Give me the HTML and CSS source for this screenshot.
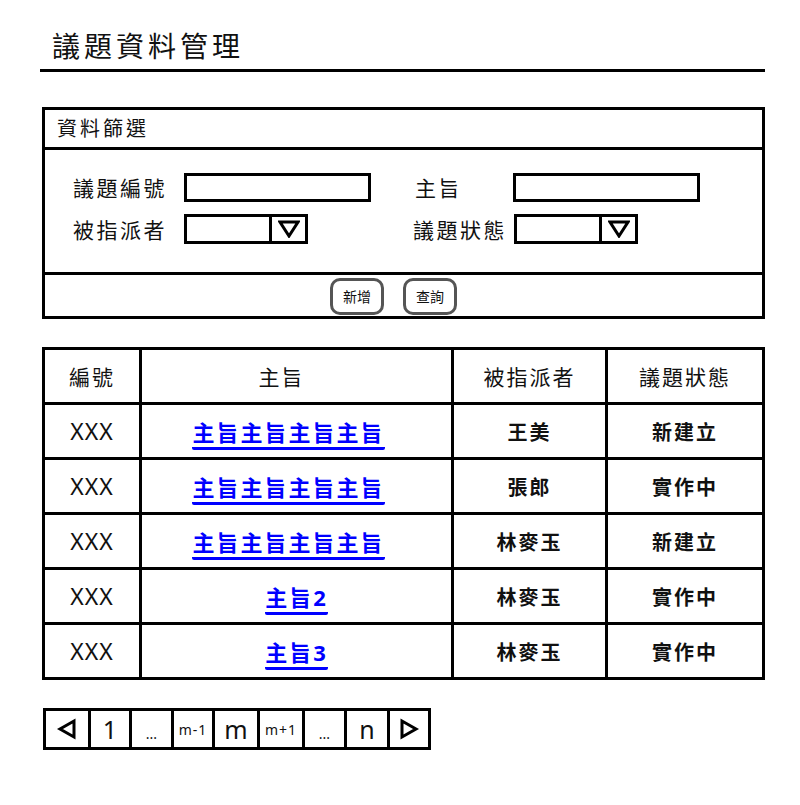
FILE: index.html
```html
<!DOCTYPE html>
<html lang="zh-Hant">
<head>
  <meta charset="UTF-8">
  <title>議題資料管理</title>
  <link rel="stylesheet" href="styles.css">
</head>
<body>
  <div class="page">
    <!-- Title -->
    <h1 class="page-title">議題資料管理</h1>

    <!-- Filter panel -->
    <div class="filter-box">
      <div class="filter-head">資料篩選</div>
      <div class="filter-body">
        <div class="field-row">
          <label class="field-label">議題編號</label>
          <div class="text-input wide"></div>
          <label class="field-label second">主旨</label>
          <div class="text-input wide"></div>
        </div>
        <div class="field-row">
          <label class="field-label">被指派者</label>
          <div class="select-input">
            <span class="select-value"></span>
            <span class="select-arrow">
              <svg width="22" height="18" viewBox="0 0 22 18"><path d="M2 2 L20 2 L11 16 Z" fill="none" stroke="#000" stroke-width="3" stroke-linejoin="miter"/></svg>
            </span>
          </div>
          <label class="field-label second">議題狀態</label>
          <div class="select-input">
            <span class="select-value"></span>
            <span class="select-arrow">
              <svg width="22" height="18" viewBox="0 0 22 18"><path d="M2 2 L20 2 L11 16 Z" fill="none" stroke="#000" stroke-width="3" stroke-linejoin="miter"/></svg>
            </span>
          </div>
        </div>
      </div>
      <div class="filter-foot">
        <button class="round-btn">新增</button>
        <button class="round-btn">查詢</button>
      </div>
    </div>

    <!-- Results -->
    <table class="issue-table">
      <colgroup>
        <col class="c-id">
        <col class="c-subject">
        <col class="c-owner">
        <col class="c-status">
      </colgroup>
      <thead>
        <tr>
          <th>編號</th>
          <th class="th-subject">主旨</th>
          <th>被指派者</th>
          <th>議題狀態</th>
        </tr>
      </thead>
      <tbody>
        <tr>
          <td>XXX</td>
          <td><a class="subject-link long" href="#">主旨主旨主旨主旨</a></td>
          <td class="strong">王美</td>
          <td class="strong">新建立</td>
        </tr>
        <tr>
          <td>XXX</td>
          <td><a class="subject-link long" href="#">主旨主旨主旨主旨</a></td>
          <td class="strong">張郎</td>
          <td class="strong">實作中</td>
        </tr>
        <tr>
          <td>XXX</td>
          <td><a class="subject-link long" href="#">主旨主旨主旨主旨</a></td>
          <td class="strong">林麥玉</td>
          <td class="strong">新建立</td>
        </tr>
        <tr>
          <td>XXX</td>
          <td><a class="subject-link" href="#">主旨2</a></td>
          <td class="strong">林麥玉</td>
          <td class="strong">實作中</td>
        </tr>
        <tr>
          <td>XXX</td>
          <td><a class="subject-link" href="#">主旨3</a></td>
          <td class="strong">林麥玉</td>
          <td class="strong">實作中</td>
        </tr>
      </tbody>
    </table>

    <!-- Pager -->
    <div class="pager">
      <span class="pg w45">
        <svg width="22" height="22" viewBox="0 0 22 22"><path d="M18 3 L18 19 L4 11 Z" fill="none" stroke="#000" stroke-width="3"/></svg>
      </span>
      <span class="pg w41 big">1</span>
      <span class="pg w42 dots">...</span>
      <span class="pg w41 small">m-1</span>
      <span class="pg w45 big">m</span>
      <span class="pg w45 small">m+1</span>
      <span class="pg w42 dots">...</span>
      <span class="pg w43 big">n</span>
      <span class="pg w38 last">
        <svg width="22" height="22" viewBox="0 0 22 22"><path d="M4 3 L4 19 L18 11 Z" fill="none" stroke="#000" stroke-width="3"/></svg>
      </span>
    </div>
  </div>
</body>
</html>
```

FILE: styles.css
```css
body {
  margin: 0;
  background: #ffffff;
  color: #111;
  font-family: "Noto Sans", "Noto Sans CJK TC", sans-serif;
}

.page {
  width: 725px;
  padding: 0 0 0 40px;
}

.page-title {
  margin: 0;
  padding: 26px 0 0 12px;
  height: 43px;
  font-size: 28px;
  font-weight: normal;
  letter-spacing: 4px;
  line-height: 40px;
  border-bottom: 3px solid #000;
}

/* filter panel */
.filter-box {
  margin: 35px 0 0 2px;
  width: 717px;
  border: 3px solid #000;
}

.filter-head {
  height: 37px;
  line-height: 37px;
  padding-left: 12px;
  font-size: 20px;
  letter-spacing: 3px;
  border-bottom: 3px solid #000;
}

.filter-body {
  height: 125px;
  padding: 22px 0 0 28px;
  box-sizing: border-box;
  border-bottom: 3px solid #000;
}

.field-row {
  display: flex;
  align-items: center;
  height: 30px;
  margin-bottom: 12px;
}

.field-label {
  width: 111px;
  font-size: 21px;
  letter-spacing: 2.5px;
}

.field-label.second {
  width: 98px;
  margin-left: 44px;
}

.field-row:last-child .field-label.second {
  margin-left: 105px;
  width: 101px;
}

.text-input {
  box-sizing: border-box;
  height: 29px;
  border: 3px solid #000;
}

.text-input.wide {
  width: 187px;
}

.select-input {
  box-sizing: border-box;
  display: flex;
  width: 124px;
  height: 30px;
  border: 3px solid #000;
}

.select-value {
  flex: 1;
  border-right: 3px solid #000;
}

.select-arrow {
  width: 33px;
  display: flex;
  align-items: center;
  justify-content: center;
}

.filter-foot {
  height: 41px;
  display: flex;
  justify-content: center;
  align-items: center;
  gap: 19px;
  padding-right: 20px;
}

.round-btn {
  width: 54px;
  height: 37px;
  margin-top: 1px;
  background: #fff;
  border: 3px solid #555;
  border-radius: 10px;
  font-family: "Noto Sans CJK TC", sans-serif;
  font-size: 14px;
  color: #111;
  padding: 0;
}

/* result table */
.issue-table {
  margin: 28px 0 0 2px;
  width: 720px;
  border-collapse: collapse;
  table-layout: fixed;
}

.c-id { width: 97px; }
.c-subject { width: 312px; }
.c-owner { width: 154px; }
.c-status { width: 157px; }

.issue-table th,
.issue-table td {
  border: 3px solid #000;
  height: 52px;
  padding: 0;
  text-align: center;
  vertical-align: middle;
  font-size: 21px;
  letter-spacing: 2px;
  font-weight: normal;
}

.issue-table th.th-subject {
  padding-right: 30px;
}

.issue-table td {
  font-size: 23px;
  letter-spacing: 1px;
}

.issue-table td.strong {
  font-weight: bold;
  font-size: 20px;
  letter-spacing: 2px;
}

.subject-link {
  display: inline-block;
  color: #0000ff;
  font-weight: bold;
  font-size: 22px;
  letter-spacing: 2px;
  text-decoration: none;
  line-height: 26px;
  padding: 0 0 2px 0;
  margin-top: 6px;
  border-bottom: 3px solid #0000ff;
  border-radius: 2px;
}

.subject-link.long {
  margin-right: 16px;
}

/* pager */
.pager {
  display: flex;
  margin: 28px 0 0 3px;
  width: max-content;
  border: 3px solid #000;
  height: 36px;
}

.pg {
  box-sizing: border-box;
  display: flex;
  align-items: center;
  justify-content: center;
  border-right: 3px solid #000;
  font-size: 22px;
}

.pg.last { border-right: none; }

.pg.big { font-size: 25px; }
.pg.small { font-size: 14px; letter-spacing: 1px; }
.pg.dots { font-size: 14px; align-items: flex-end; padding-bottom: 4px; }

.w38 { width: 38px; }
.w41 { width: 41px; }
.w42 { width: 42px; }
.w43 { width: 43px; }
.w45 { width: 45px; }
```
